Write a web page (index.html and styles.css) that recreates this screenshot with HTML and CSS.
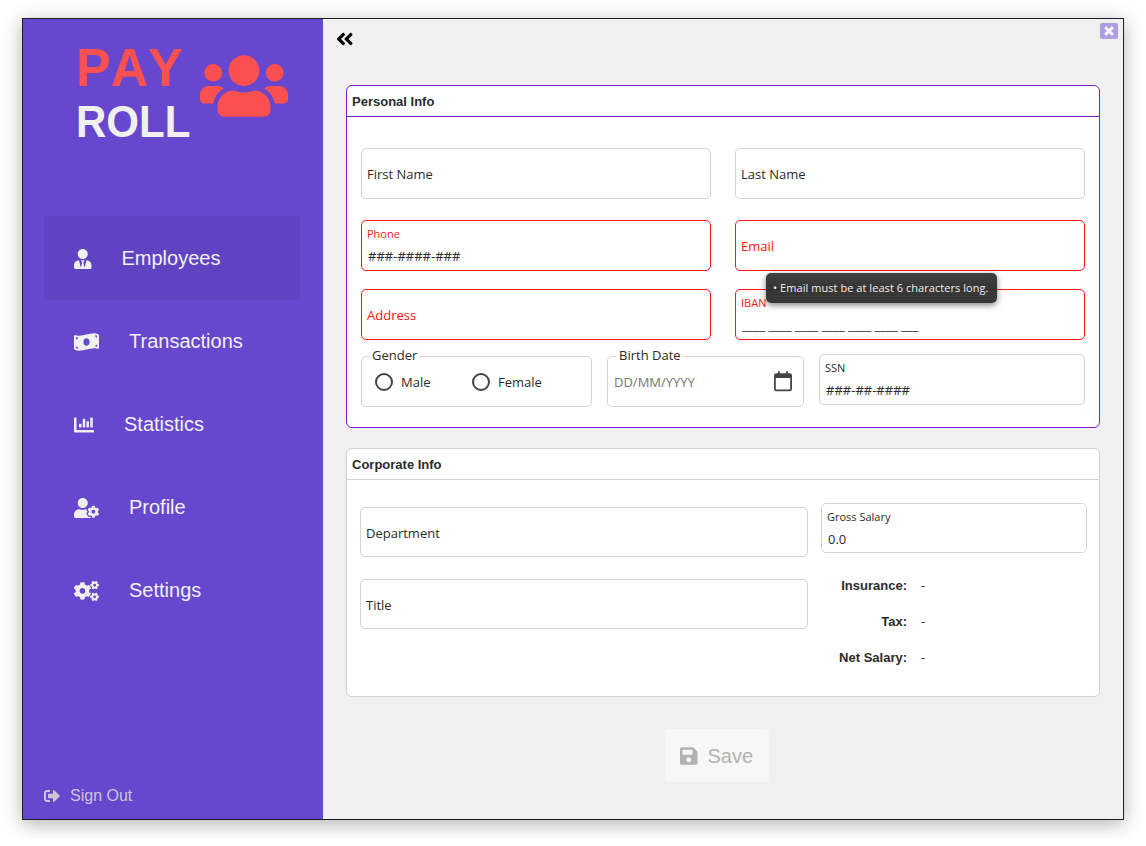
FILE: index.html
```html
<!DOCTYPE html>
<html lang="en">
<head>
<meta charset="utf-8">
<title>Payroll</title>
<link rel="stylesheet" href="styles.css">
</head>
<body>
<div class="window">
  <aside class="sidebar">
    <div class="logo">
      <div class="logo-text"><span class="logo-pay">PAY</span><span class="logo-roll">ROLL</span></div>
      <svg class="logo-icon" viewBox="0 32 640 448"><path d="M96 224c35.3 0 64-28.7 64-64s-28.7-64-64-64-64 28.7-64 64 28.7 64 64 64zm448 0c35.3 0 64-28.7 64-64s-28.7-64-64-64-64 28.7-64 64 28.7 64 64 64zm32 32h-64c-17.6 0-33.5 7.1-45.1 18.6 40.3 22.1 68.9 62 75.1 109.4h66c17.7 0 32-14.3 32-32v-32c0-35.3-28.7-64-64-64zm-256 0c61.9 0 112-50.1 112-112S381.9 32 320 32 208 82.1 208 144s50.1 112 112 112zm76.8 32h-8.3c-20.8 10-43.9 16-68.5 16s-47.6-6-68.5-16h-8.3C179.6 288 128 339.6 128 403.2V432c0 26.5 21.5 48 48 48h288c26.5 0 48-21.5 48-48v-28.8c0-63.6-51.6-115.2-115.2-115.2zm-223.7-13.4C161.5 263.1 145.6 256 128 256H64c-35.3 0-64 28.7-64 64v32c0 17.7 14.3 32 32 32h65.9c6.3-47.4 34.9-87.3 75.2-109.4z"/></svg>
    </div>
    <nav class="menu">
      <a class="menu-item selected"><svg viewBox="0 0 448 512"><path d="M224 256c70.7 0 128-57.3 128-128S294.7 0 224 0 96 57.3 96 128s57.3 128 128 128zm95.8 32.6L272 480l-32-136 32-56h-96l32 56-32 136-47.8-191.4C56.9 292 0 350.3 0 422.4V464c0 26.5 21.5 48 48 48h352c26.5 0 48-21.5 48-48v-41.6c0-72.1-56.9-130.4-128.2-133.8z"/></svg><span>Employees</span></a>
      <a class="menu-item"><svg viewBox="0 0 640 512"><path d="M621.16 54.46C582.37 38.19 543.55 32 504.75 32c-123.17-.01-246.33 62.34-369.5 62.34-30.89 0-61.76-3.92-92.65-13.72-3.47-1.1-6.95-1.62-10.35-1.62C15.04 79 0 92.32 0 110.81v317.26c0 12.63 7.23 24.6 18.84 29.46C57.63 473.81 96.45 480 135.25 480c123.17 0 246.34-62.35 369.51-62.35 30.89 0 61.76 3.92 92.65 13.72 3.47 1.1 6.95 1.62 10.35 1.62 17.21 0 32.25-13.32 32.25-31.81V83.93c-.01-12.64-7.24-24.6-18.85-29.47zM48 132.22c20.12 5.04 41.12 7.57 62.72 8.93C104.84 170.54 79 192.69 48 192.69v-60.47zm0 285v-47.78c34.37 0 62.18 27.27 63.71 61.4-22.53-1.81-43.59-6.31-63.71-13.62zM320 352c-44.19 0-80-42.99-80-96 0-53.02 35.82-96 80-96s80 42.98 80 96c0 53.03-35.83 96-80 96zm272 27.78c-17.52-4.39-35.71-6.85-54.32-8.44 5.87-26.08 27.5-45.88 54.32-49.28v57.72zm0-236.11c-30.89-3.91-54.86-29.7-55.81-61.55 19.54 2.17 38.09 6.23 55.81 12.66v48.89z"/></svg><span>Transactions</span></a>
      <a class="menu-item"><svg viewBox="0 0 512 512"><path d="M332.8 320h38.4c6.4 0 12.8-6.4 12.8-12.8V172.8c0-6.4-6.4-12.8-12.8-12.8h-38.4c-6.4 0-12.8 6.4-12.8 12.8v134.4c0 6.4 6.4 12.8 12.8 12.8zm96 0h38.4c6.4 0 12.8-6.4 12.8-12.8V76.8c0-6.4-6.4-12.8-12.8-12.8h-38.4c-6.4 0-12.8 6.4-12.8 12.8v230.4c0 6.4 6.4 12.8 12.8 12.8zm-288 0h38.4c6.4 0 12.8-6.4 12.8-12.8v-70.4c0-6.4-6.4-12.8-12.8-12.8h-38.4c-6.4 0-12.8 6.4-12.8 12.8v70.4c0 6.4 6.4 12.8 12.8 12.8zm96 0h38.4c6.4 0 12.8-6.4 12.8-12.8V108.8c0-6.4-6.4-12.8-12.8-12.8h-38.4c-6.4 0-12.8 6.4-12.8 12.8v198.4c0 6.4 6.4 12.8 12.8 12.8zM496 384H64V80c0-8.84-7.16-16-16-16H16C7.16 64 0 71.16 0 80v336c0 17.67 14.33 32 32 32h464c8.84 0 16-7.16 16-16v-32c0-8.84-7.16-16-16-16z"/></svg><span>Statistics</span></a>
      <a class="menu-item"><svg viewBox="0 0 640 512"><path d="M610.5 373.3c2.6-14.1 2.6-28.5 0-42.6l25.8-14.9c3-1.7 4.3-5.2 3.3-8.5-6.7-21.6-18.2-41.2-33.2-57.4-2.3-2.5-6-3.1-9-1.4l-25.8 14.9c-10.9-9.3-23.4-16.5-36.9-21.3v-29.8c0-3.4-2.4-6.4-5.7-7.1-22.3-5-45-4.8-66.2 0-3.3.7-5.7 3.7-5.7 7.1v29.8c-13.5 4.8-26 12-36.9 21.3l-25.8-14.9c-2.9-1.7-6.7-1.1-9 1.4-15 16.2-26.5 35.8-33.2 57.4-1 3.3.4 6.8 3.3 8.5l25.8 14.9c-2.6 14.1-2.6 28.5 0 42.6l-25.8 14.9c-3 1.7-4.3 5.2-3.3 8.5 6.7 21.6 18.2 41.1 33.2 57.4 2.3 2.5 6 3.1 9 1.4l25.8-14.9c10.9 9.3 23.4 16.5 36.9 21.3v29.8c0 3.4 2.4 6.4 5.7 7.1 22.3 5 45 4.8 66.2 0 3.3-.7 5.7-3.7 5.7-7.1v-29.8c13.5-4.8 26-12 36.9-21.3l25.8 14.9c2.9 1.7 6.7 1.1 9-1.4 15-16.2 26.5-35.8 33.2-57.4 1-3.3-.4-6.8-3.3-8.5l-25.8-14.9zM496 400.5c-26.8 0-48.5-21.8-48.5-48.5s21.8-48.5 48.5-48.5 48.5 21.8 48.5 48.5-21.7 48.5-48.5 48.5zM224 256c70.7 0 128-57.3 128-128S294.7 0 224 0 96 57.3 96 128s57.3 128 128 128zm201.2 226.5c-2.3-1.2-4.6-2.6-6.8-3.9l-7.9 4.6c-6 3.4-12.8 5.3-19.6 5.3-10.9 0-21.4-4.6-28.9-12.6-18.3-19.8-32.3-43.9-40.2-69.6-5.5-17.7 1.9-36.4 17.9-45.7l7.9-4.6c-.1-2.6-.1-5.2 0-7.8l-7.9-4.6c-16-9.2-23.4-28-17.9-45.7.9-2.9 2.2-5.8 3.2-8.7-3.8-.3-7.5-1.2-11.4-1.2h-16.7c-22.2 10.2-46.9 16-72.9 16s-50.6-5.8-72.9-16h-16.7C60.2 288 0 348.2 0 422.4V464c0 26.5 21.5 48 48 48h352c10.1 0 19.5-3.2 27.2-8.5-1.2-3.8-2-7.7-2-11.8v-9.2z"/></svg><span>Profile</span></a>
      <a class="menu-item"><svg viewBox="0 0 640 512"><path d="M512.1 191l-8.2 14.3c-3 5.3-9.4 7.5-15.1 5.4-11.8-4.4-22.6-10.7-32.1-18.6-4.6-3.8-5.8-10.5-2.8-15.7l8.2-14.3c-6.9-8-12.3-17.3-15.9-27.4h-16.5c-6 0-11.2-4.3-12.2-10.3-2-12-2.1-24.6 0-37.1 1-6 6.2-10.4 12.2-10.4h16.5c3.6-10.1 9-19.4 15.9-27.4l-8.2-14.3c-3-5.2-1.9-11.9 2.8-15.7 9.5-7.9 20.4-14.2 32.1-18.6 5.7-2.1 12.1.1 15.1 5.4l8.2 14.3c10.5-1.9 21.2-1.9 31.7 0L552 6.3c3-5.3 9.4-7.5 15.1-5.4 11.8 4.4 22.6 10.7 32.1 18.6 4.6 3.8 5.8 10.5 2.8 15.7l-8.2 14.3c6.9 8 12.3 17.3 15.9 27.4h16.5c6 0 11.2 4.3 12.2 10.3 2 12 2.1 24.6 0 37.1-1 6-6.2 10.4-12.2 10.4h-16.5c-3.6 10.1-9 19.4-15.9 27.4l8.2 14.3c3 5.2 1.9 11.9-2.8 15.7-9.5 7.9-20.4 14.2-32.1 18.6-5.7 2.1-12.1-.1-15.1-5.4l-8.2-14.3c-10.4 1.9-21.2 1.9-31.7 0zm-10.5-58.8c38.5 29.6 82.4-14.3 52.8-52.8-38.5-29.7-82.4 14.3-52.8 52.8zM386.3 286.1l33.7 16.8c10.1 5.8 14.5 18.1 10.5 29.1-8.9 24.2-26.4 46.4-42.6 65.8-7.4 8.9-20.2 11.1-30.3 5.3l-29.1-16.8c-16 13.7-34.6 24.6-54.9 31.7v33.6c0 11.6-8.3 21.6-19.7 23.6-24.6 4.2-50.4 4.4-75.9 0-11.5-2-20-11.9-20-23.6V418c-20.3-7.2-38.9-18-54.9-31.7L74 403c-10 5.8-22.9 3.6-30.3-5.3-16.2-19.4-33.3-41.6-42.2-65.7-4-10.9.4-23.2 10.5-29.1l33.3-16.8c-3.9-20.9-3.9-42.4 0-63.4L12 205.8c-10.1-5.8-14.6-18.1-10.5-29 8.9-24.2 26-46.4 42.2-65.8 7.4-8.9 20.2-11.1 30.3-5.3l29.1 16.8c16-13.7 34.6-24.6 54.9-31.7V57.1c0-11.5 8.2-21.5 19.6-23.5 24.6-4.2 50.5-4.4 76-.1 11.5 2 20 11.9 20 23.6v33.6c20.3 7.2 38.9 18 54.9 31.7l29.1-16.8c10-5.8 22.9-3.6 30.3 5.3 16.2 19.4 33.2 41.6 42.1 65.8 4 10.9.1 23.2-10 29.1l-33.7 16.8c3.9 21 3.9 42.5 0 63.5zm-117.6 21.1c59.2-77-28.7-164.9-105.7-105.7-59.2 77 28.7 164.9 105.7 105.7zm243.4 182.7l-8.2 14.3c-3 5.3-9.4 7.5-15.1 5.4-11.8-4.4-22.6-10.7-32.1-18.6-4.6-3.8-5.8-10.5-2.8-15.7l8.2-14.3c-6.9-8-12.3-17.3-15.9-27.4h-16.5c-6 0-11.2-4.3-12.2-10.3-2-12-2.1-24.6 0-37.1 1-6 6.2-10.4 12.2-10.4h16.5c3.6-10.1 9-19.4 15.9-27.4l-8.2-14.3c-3-5.2-1.9-11.9 2.8-15.7 9.5-7.9 20.4-14.2 32.1-18.6 5.7-2.1 12.1.1 15.1 5.4l8.2 14.3c10.5-1.9 21.2-1.9 31.7 0l8.2-14.3c3-5.3 9.4-7.5 15.1-5.4 11.8 4.4 22.6 10.7 32.1 18.6 4.6 3.8 5.8 10.5 2.8 15.7l-8.2 14.3c6.9 8 12.3 17.3 15.9 27.4h16.5c6 0 11.2 4.3 12.2 10.3 2 12 2.1 24.6 0 37.1-1 6-6.2 10.4-12.2 10.4h-16.5c-3.6 10.1-9 19.4-15.9 27.4l8.2 14.3c3 5.2 1.9 11.9-2.8 15.7-9.5 7.9-20.4 14.2-32.1 18.6-5.7 2.1-12.1-.1-15.1-5.4l-8.2-14.3c-10.4 1.9-21.2 1.9-31.7 0zM501.6 431c38.5 29.6 82.4-14.3 52.8-52.8-38.5-29.6-82.4 14.3-52.8 52.8z"/></svg><span>Settings</span></a>
    </nav>
    <a class="sign-out"><svg viewBox="0 0 512 512"><path d="M497 273L329 441c-15 15-41 4.5-41-17v-96H152c-13.3 0-24-10.7-24-24v-96c0-13.3 10.7-24 24-24h136V88c0-21.4 25.9-32 41-17l168 168c9.3 9.4 9.3 24.6 0 34zM192 436v-40c0-6.6-5.4-12-12-12H96c-17.7 0-32-14.3-32-32V160c0-17.7 14.3-32 32-32h84c6.6 0 12-5.4 12-12V76c0-6.6-5.4-12-12-12H96c-53 0-96 43-96 96v192c0 53 43 96 96 96h84c6.6 0 12-5.4 12-12z"/></svg><span>Sign Out</span></a>
  </aside>

  <main class="content">
    <header class="topbar">
      <svg class="collapse" viewBox="0 0 448 512"><path d="M223.7 239l136-136c9.4-9.4 24.6-9.4 33.9 0l22.6 22.6c9.4 9.4 9.4 24.6 0 33.9L319.9 256l96.4 96.4c9.4 9.4 9.4 24.6 0 33.9L393.7 409c-9.4 9.4-24.6 9.4-33.9 0l-136-136c-9.5-9.4-9.5-24.6-.1-34zm-192 34l136 136c9.4 9.4 24.6 9.4 33.9 0l22.6-22.6c9.4-9.4 9.4-24.6 0-33.9L127.9 256l96.4-96.4c9.4-9.4 9.4-24.6 0-33.9L201.7 103c-9.4-9.4-24.6-9.4-33.9 0l-136 136c-9.5 9.4-9.5 24.6-.1 34z"/></svg>
      <div class="close"><svg viewBox="0 0 10 10"><path d="M2.2 2.2L7.8 7.8M7.8 2.2L2.2 7.8"/></svg></div>
    </header>

    <section class="panel personal">
      <h2>Personal Info</h2>
      <div class="panel-body">
        <div class="field"><span class="label">First Name</span></div>
        <div class="field"><span class="label">Last Name</span></div>
        <div class="field invalid filled"><span class="label">Phone</span><span class="value">###-####-###</span></div>
        <div class="field invalid"><span class="label">Email</span><div class="tooltip">• Email must be at least 6 characters long.</div></div>
        <div class="field invalid"><span class="label">Address</span></div>
        <div class="field invalid filled"><span class="label">IBAN</span><span class="value iban">____ ____ ____ ____ ____ ____ ___</span></div>
        <div class="bottom-row">
          <div class="field titled gender">
            <span class="legend">Gender</span>
            <span class="radio"><i></i>Male</span>
            <span class="radio"><i></i>Female</span>
          </div>
          <div class="field titled birth">
            <span class="legend">Birth Date</span>
            <span class="placeholder">DD/MM/YYYY</span>
            <svg viewBox="0 0 18 20.5"><path fill-rule="evenodd" d="M4 0.3h1.8v1.9h6.4V0.3H14v1.9h1.6A2.4 2.4 0 0 1 18 4.6v13.3a2.4 2.4 0 0 1-2.4 2.4H2.4A2.4 2.4 0 0 1 0 17.9V4.6a2.4 2.4 0 0 1 2.4-2.4H4zM1.8 7v11.1a.5.5 0 0 0 .5.5h13.4a.5.5 0 0 0 .5-.5V7z"/></svg>
          </div>
          <div class="field filled ssn"><span class="label">SSN</span><span class="value">###-##-####</span></div>
        </div>
      </div>
    </section>

    <section class="panel corporate">
      <h2>Corporate Info</h2>
      <div class="panel-body">
        <div class="job">
          <div class="field"><span class="label">Department</span></div>
          <div class="field"><span class="label">Title</span></div>
        </div>
        <div class="pay">
          <div class="field filled"><span class="label">Gross Salary</span><span class="value">0.0</span></div>
          <dl class="totals">
            <dt>Insurance:</dt><dd>-</dd>
            <dt>Tax:</dt><dd>-</dd>
            <dt>Net Salary:</dt><dd>-</dd>
          </dl>
        </div>
      </div>
    </section>

    <div class="save"><svg viewBox="0 0 448 512"><path d="M433.941 129.941l-83.882-83.882A48 48 0 0 0 316.118 32H48C21.49 32 0 53.49 0 80v352c0 26.51 21.49 48 48 48h352c26.51 0 48-21.49 48-48V163.882a48 48 0 0 0-14.059-33.941zM224 416c-35.346 0-64-28.654-64-64 0-35.346 28.654-64 64-64s64 28.654 64 64c0 35.346-28.654 64-64 64zm96-304.52V212c0 6.627-5.373 12-12 12H76c-6.627 0-12-5.373-12-12V108c0-6.627 5.373-12 12-12h228.52c3.183 0 6.235 1.264 8.485 3.515l3.48 3.48A11.996 11.996 0 0 1 320 111.48z"/></svg><span>Save</span></div>
  </main>
</div>
</body>
</html>
```
FILE: styles.css
```css
* { box-sizing: border-box; }
body {
  margin: 0;
  padding: 18px 22px;
  background: #fff;
  overflow: hidden;
  font: 13px/18px "Open Sans", "Noto Sans", sans-serif;
  color: #2b2b2b;
}
.window {
  display: flex;
  width: 1102px;
  height: 802px;
  border: 1px solid #202020;
  background: #f0f0f0;
  box-shadow: 0 4px 18px rgba(0, 0, 0, .3);
}

/* Sidebar */
.sidebar {
  display: flex;
  flex-direction: column;
  width: 300px;
  background: #6747cd;
  color: #f0f0f0;
  font-family: "Liberation Sans", Arial, sans-serif;
}
.sidebar svg { fill: currentColor; }
.logo {
  display: flex;
  height: 197px;
  padding: 23px 0 0 53px;
}
.logo-text {
  display: flex;
  flex-direction: column;
  width: 124px;
  font-weight: bold;
  font-kerning: none;
}
.logo-pay, .logo-roll {
  transform: scaleY(1.04);
  transform-origin: 0 80%;
}
.logo-pay { height: 56px; color: #fa5050; font-size: 52px; line-height: 52px; }
.logo-roll { font-size: 42px; line-height: 50px; }
.logo-icon { width: 88px; height: 62px; margin-top: 13px; color: #fa5050; }
.menu { display: flex; flex-direction: column; padding: 0 23px 0 21px; }
.menu-item {
  display: flex;
  align-items: center;
  gap: 30px;
  height: 84px;
  margin-bottom: -1px;
  padding-left: 30px;
  border-radius: 4px;
  font-size: 20px;
}
.menu-item svg { height: 20px; margin-top: 1px; }
.selected { background: #6043c1; }
.sign-out {
  display: flex;
  align-items: center;
  gap: 10px;
  margin: auto 0 14px 21px;
  color: #cbc6d8;
  font-size: 16px;
}
.sign-out svg { width: 16px; height: 16px; }

/* Content */
.content { display: flex; flex-direction: column; flex: 1; padding: 0 23px; }
.topbar {
  display: flex;
  justify-content: space-between;
  align-items: flex-start;
  height: 66px;
  margin: 0 -18px 0 -10px;
}
.collapse { width: 17.5px; height: 20px; margin-top: 9.5px; }
.close {
  display: flex;
  align-items: center;
  justify-content: center;
  width: 18px;
  height: 16px;
  margin-top: 4px;
  border-radius: 2px;
  background: #ad9ee0;
}
.close svg { width: 10px; height: 10px; fill: none; stroke: #f5f3fb; stroke-width: 3; stroke-linecap: square; }

.panel { border: 1px solid #d3d3d3; border-radius: 6px; background: #fff; }
.panel h2 {
  height: 31px;
  margin: 0;
  padding-left: 5px;
  border-bottom: 1px solid #d3d3d3;
  font: bold 13px/31px "Liberation Sans", Arial, sans-serif;
}
.personal, .personal h2 { border-color: #7a1fd0; }
.personal { height: 343px; }
.personal .panel-body {
  display: grid;
  grid-template-columns: 350px 350px;
  grid-template-rows: 72px 69px 65px 53px;
  column-gap: 24px;
  padding: 31px 14px 0;
}

.field {
  position: relative;
  display: flex;
  align-items: center;
  height: 51px;
  padding: 0 5px;
  border: 1px solid #d3d3d3;
  border-radius: 5px;
  background: #fff;
}
.invalid { border-color: #ff1414; }
.invalid .label { color: #ff1414; }
.filled { flex-direction: column; align-items: flex-start; justify-content: flex-start; padding-top: 5px; }
.filled .label { height: 18px; font-size: 11px; line-height: 16px; }
.filled .value { padding-left: 1px; line-height: 24px; }
.iban { letter-spacing: .08px; }

.tooltip {
  position: absolute;
  z-index: 1;
  left: 30px;
  top: 52px;
  width: 231px;
  height: 30px;
  padding-left: 7px;
  border-radius: 5px;
  background: linear-gradient(rgba(50, 50, 50, .92), rgba(40, 40, 40, .93) 40%);
  box-shadow: 0 2px 6px rgba(0, 0, 0, .5);
  color: #f0f0f0;
  font-size: 11px;
  line-height: 30px;
  letter-spacing: .05px;
  white-space: nowrap;
}

.bottom-row { display: flex; grid-column: 1 / -1; gap: 15px; }
.titled { margin-top: 2px; }
.legend {
  position: absolute;
  top: -11px;
  left: 7px;
  padding: 0 3px;
  background: #fff;
}
.gender { width: 231px; padding-left: 13px; }
.radio { display: flex; align-items: center; gap: 8px; width: 97px; }
.radio i { width: 18px; height: 18px; border: 2px solid #444; border-radius: 50%; }
.birth { width: 197px; justify-content: space-between; padding: 0 11px 0 6px; }
.birth .legend { left: 8px; }
.birth svg { width: 18px; height: 20.5px; fill: #444; }
.placeholder { color: #757575; }
.ssn { width: 266px; }

.corporate { height: 249px; margin-top: 20px; }
.corporate .panel-body { display: flex; gap: 13px; padding: 23px 12px 0 13px; }
.corporate .field { height: 50px; }
.job { display: flex; flex-direction: column; gap: 22px; width: 448px; padding-top: 4px; }
.job .field { padding-top: 2px; }
.pay { width: 266px; }
.totals {
  display: grid;
  grid-template-columns: 86px 1fr;
  grid-auto-rows: 36px;
  column-gap: 14px;
  margin: 15px 0 0;
  line-height: 36px;
}
.totals dt { text-align: right; font-family: "Liberation Sans", Arial, sans-serif; font-weight: bold; }
.totals dd { margin: 0; line-height: 34px; }

.save {
  display: flex;
  align-items: center;
  align-self: center;
  gap: 10px;
  width: 104px;
  height: 53px;
  margin: 32px 0 0 -12px;
  padding: 1px 0 0 15px;
  border-radius: 4px;
  background: #f7f7f7;
  color: #b2b2b2;
  font: 20px "Liberation Sans", Arial, sans-serif;
}
.save svg { height: 20px; fill: currentColor; }
```
